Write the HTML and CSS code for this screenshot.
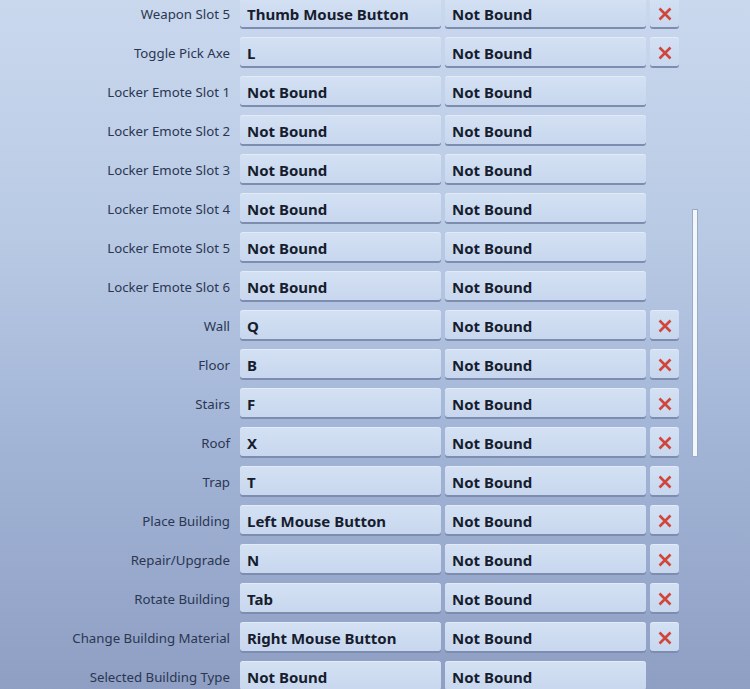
FILE: index.html
```html
<!DOCTYPE html>
<html>
<head>
<meta charset="utf-8">
<link rel="stylesheet" href="styles.css">
</head>
<body>
<div class="page">
  <div class="list">
    <div class="row"><div class="label">Weapon Slot 5</div><div class="key">Thumb Mouse Button</div><div class="key">Not Bound</div><div class="clear"><svg viewBox="0 0 14 14"><path d="M1.5 1.5L12.5 12.5M12.5 1.5L1.5 12.5"/></svg></div></div>
    <div class="row"><div class="label">Toggle Pick Axe</div><div class="key">L</div><div class="key">Not Bound</div><div class="clear"><svg viewBox="0 0 14 14"><path d="M1.5 1.5L12.5 12.5M12.5 1.5L1.5 12.5"/></svg></div></div>
    <div class="row"><div class="label">Locker Emote Slot 1</div><div class="key">Not Bound</div><div class="key">Not Bound</div></div>
    <div class="row"><div class="label">Locker Emote Slot 2</div><div class="key">Not Bound</div><div class="key">Not Bound</div></div>
    <div class="row"><div class="label">Locker Emote Slot 3</div><div class="key">Not Bound</div><div class="key">Not Bound</div></div>
    <div class="row"><div class="label">Locker Emote Slot 4</div><div class="key">Not Bound</div><div class="key">Not Bound</div></div>
    <div class="row"><div class="label">Locker Emote Slot 5</div><div class="key">Not Bound</div><div class="key">Not Bound</div></div>
    <div class="row"><div class="label">Locker Emote Slot 6</div><div class="key">Not Bound</div><div class="key">Not Bound</div></div>
    <div class="row"><div class="label">Wall</div><div class="key">Q</div><div class="key">Not Bound</div><div class="clear"><svg viewBox="0 0 14 14"><path d="M1.5 1.5L12.5 12.5M12.5 1.5L1.5 12.5"/></svg></div></div>
    <div class="row"><div class="label">Floor</div><div class="key">B</div><div class="key">Not Bound</div><div class="clear"><svg viewBox="0 0 14 14"><path d="M1.5 1.5L12.5 12.5M12.5 1.5L1.5 12.5"/></svg></div></div>
    <div class="row"><div class="label">Stairs</div><div class="key">F</div><div class="key">Not Bound</div><div class="clear"><svg viewBox="0 0 14 14"><path d="M1.5 1.5L12.5 12.5M12.5 1.5L1.5 12.5"/></svg></div></div>
    <div class="row"><div class="label">Roof</div><div class="key">X</div><div class="key">Not Bound</div><div class="clear"><svg viewBox="0 0 14 14"><path d="M1.5 1.5L12.5 12.5M12.5 1.5L1.5 12.5"/></svg></div></div>
    <div class="row"><div class="label">Trap</div><div class="key">T</div><div class="key">Not Bound</div><div class="clear"><svg viewBox="0 0 14 14"><path d="M1.5 1.5L12.5 12.5M12.5 1.5L1.5 12.5"/></svg></div></div>
    <div class="row"><div class="label">Place Building</div><div class="key">Left Mouse Button</div><div class="key">Not Bound</div><div class="clear"><svg viewBox="0 0 14 14"><path d="M1.5 1.5L12.5 12.5M12.5 1.5L1.5 12.5"/></svg></div></div>
    <div class="row"><div class="label">Repair/Upgrade</div><div class="key">N</div><div class="key">Not Bound</div><div class="clear"><svg viewBox="0 0 14 14"><path d="M1.5 1.5L12.5 12.5M12.5 1.5L1.5 12.5"/></svg></div></div>
    <div class="row"><div class="label">Rotate Building</div><div class="key">Tab</div><div class="key">Not Bound</div><div class="clear"><svg viewBox="0 0 14 14"><path d="M1.5 1.5L12.5 12.5M12.5 1.5L1.5 12.5"/></svg></div></div>
    <div class="row"><div class="label">Change Building Material</div><div class="key">Right Mouse Button</div><div class="key">Not Bound</div><div class="clear"><svg viewBox="0 0 14 14"><path d="M1.5 1.5L12.5 12.5M12.5 1.5L1.5 12.5"/></svg></div></div>
    <div class="row"><div class="label">Selected Building Type</div><div class="key">Not Bound</div><div class="key">Not Bound</div></div>
  </div>
  <div class="scrollbar"></div>
</div>
</body>
</html>
```
FILE: styles.css
```css
html, body {
  margin: 0;
  padding: 0;
  width: 750px;
  height: 689px;
  overflow: hidden;
}
body {
  font-family: "Noto Sans", "Open Sans", sans-serif;
  background: linear-gradient(180deg, #c9d8ed 0%, #b8c9e4 35%, #a2b4d6 65%, #8e9fc3 100%);
}
.page {
  position: relative;
  width: 750px;
  height: 689px;
}
.list {
  display: flex;
  flex-direction: column;
  gap: 8px;
  margin-top: -2px;
}
.row {
  display: grid;
  grid-template-columns: 236px 201px 201px 29px;
  column-gap: 4px;
  height: 31px;
}
.label {
  text-align: right;
  padding-right: 6px;
  font-size: 13.25px;
  color: #2b3652;
  line-height: 31px;
  padding-top: 1px;
  box-sizing: border-box;
  white-space: nowrap;
}
.key, .clear {
  height: 29px;
  border-radius: 3px;
  background: linear-gradient(180deg, #d4e1f4 0%, #c8d7ee 100%);
  box-shadow: 0 2px 0 #7d8db0, inset 0 1px 0 rgba(255,255,255,0.35);
}
.key {
  font-weight: 700;
  font-size: 15px;
  color: #161d2e;
  padding-left: 7px;
  line-height: 29px;
  padding-top: 2px;
  box-sizing: border-box;
  white-space: nowrap;
  overflow: hidden;
}
.clear {
  display: flex;
  align-items: center;
  justify-content: center;
  padding-top: 3px;
  box-sizing: border-box;
}
.clear svg {
  width: 14px;
  height: 14px;
  fill: none;
  stroke: #d0463b;
  stroke-width: 2.6;
  stroke-linecap: butt;
}
.scrollbar {
  position: absolute;
  left: 692px;
  top: 211px;
  width: 6px;
  height: 248px;
  background: #f3f6fb;
  border: 1px solid #9aabc9;
  box-sizing: border-box;
}
```
